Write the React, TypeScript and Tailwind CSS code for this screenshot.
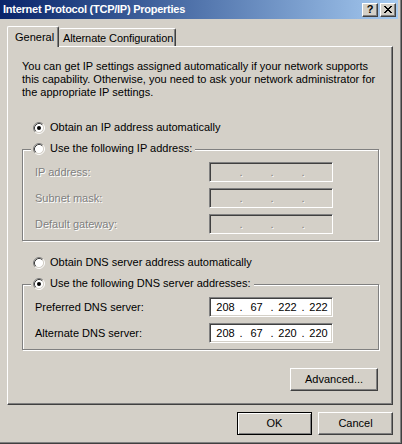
import { Fragment, type ReactNode } from 'react'
import clsx from 'clsx'

const disabledText = 'text-[#808080] [text-shadow:1px_1px_0_#ffffff]'

function Radio({ checked }: { checked?: boolean }) {
  return (
    <svg width="12" height="12" viewBox="0 0 12 12" className="shrink-0">
      <circle cx="6" cy="6" r="4.5" fill="#ffffff" />
      <path d="M2.11 9.89A5.5 5.5 0 0 1 9.89 2.11" fill="none" stroke="#808080" />
      <path d="M9.89 2.11A5.5 5.5 0 0 1 2.11 9.89" fill="none" stroke="#ffffff" />
      <path d="M2.82 9.18A4.5 4.5 0 0 1 9.18 2.82" fill="none" stroke="#404040" />
      <path d="M9.18 2.82A4.5 4.5 0 0 1 2.82 9.18" fill="none" stroke="#d4d0c8" />
      {checked && <circle cx="6" cy="6" r="2" fill="#000000" />}
    </svg>
  )
}

function RadioRow({ label, checked }: { label: string; checked?: boolean }) {
  return (
    <div className="flex h-[13px] items-center gap-[5px]">
      <Radio checked={checked} />
      <span>{label}</span>
    </div>
  )
}

function Group({ legend, checked, children }: { legend: string; checked?: boolean; children: ReactNode }) {
  return (
    <div className="ml-[14px] mr-[13px] border border-[#808080] pb-[6px] shadow-[1px_1px_0_#ffffff,inset_1px_1px_0_#ffffff]">
      <div className="-mt-[8px] ml-[8px] flex h-[13px] w-fit items-center gap-[5px] bg-[#d4d0c8] pl-[2px] pr-[3px]">
        <Radio checked={checked} />
        <span>{legend}</span>
      </div>
      <div className="mt-[7px] flex flex-col gap-[6px] pl-[12px]">{children}</div>
    </div>
  )
}

function IpBox({ parts, disabled }: { parts?: string[]; disabled?: boolean }) {
  const vals = parts ?? ['', '', '', '']
  return (
    <div
      className={clsx(
        'flex h-[20px] w-[124px] items-center border border-t-[#808080] border-l-[#808080] border-b-white border-r-white pl-[2px] shadow-[inset_1px_1px_0_#404040,inset_-1px_-1px_0_#d4d0c8]',
        disabled ? 'bg-[#d4d0c8]' : 'bg-white',
      )}
    >
      {vals.map((v, i) => (
        <Fragment key={i}>
          {i > 0 && <span className={clsx('w-[4px] text-center', disabled && disabledText)}>.</span>}
          <span className="w-[27px] text-center">{v}</span>
        </Fragment>
      ))}
    </div>
  )
}

function IpRow({ label, parts, disabled }: { label: string; parts?: string[]; disabled?: boolean }) {
  return (
    <div className="flex h-[20px] items-center">
      <span className={clsx('w-[174px]', disabled && disabledText)}>{label}</span>
      <IpBox parts={parts} disabled={disabled} />
    </div>
  )
}

function Button({ children, w, isDefault }: { children: ReactNode; w: string; isDefault?: boolean }) {
  return (
    <div
      className={clsx(
        'flex h-[23px] items-center justify-center',
        w,
        isDefault
          ? 'border border-black shadow-[inset_1px_1px_0_#ffffff,inset_-1px_-1px_0_#808080]'
          : 'border border-t-white border-l-white border-b-[#404040] border-r-[#404040] shadow-[inset_-1px_-1px_0_#808080]',
      )}
    >
      {children}
    </div>
  )
}

function CaptionButton({ children }: { children: ReactNode }) {
  return (
    <div className="flex h-[14px] w-[16px] items-center justify-center border border-t-white border-l-white border-b-[#404040] border-r-[#404040] bg-[#d4d0c8] shadow-[inset_-1px_-1px_0_#808080]">
      {children}
    </div>
  )
}

export default function App() {
  return (
    <div className="h-[444px] w-[402px] border-b border-r border-[#404040] bg-[#d4d0c8] font-['Liberation_Sans',Arial,sans-serif] text-[11px] leading-[13px] text-black">
      <div className="flex h-full flex-col border-b border-r border-[#808080] pb-[2px] pr-[2px]">
        {/* caption */}
        <div className="flex h-[19px] shrink-0 items-center justify-between bg-gradient-to-r from-[#0a246a] to-[#a6caf0] pl-[3px] pr-[2px]">
          <span className="text-[11px] font-bold tracking-[-0.25px] text-white">Internet Protocol (TCP/IP) Properties</span>
          <div className="flex gap-[2px]">
            <CaptionButton>
              <span className="text-[11px] font-bold leading-none">?</span>
            </CaptionButton>
            <CaptionButton>
              <svg width="8" height="7" viewBox="0 0 8 7" shapeRendering="crispEdges">
                <path d="M0 0h2v1h-2zM6 0h2v1h-2zM1 1h2v1h-2zM5 1h2v1h-2zM2 2h4v1h-4zM3 3h2v1h-2zM2 4h4v1h-4zM1 5h2v1h-2zM5 5h2v1h-2zM0 6h2v1h-2zM6 6h2v1h-2z" fill="#000" />
              </svg>
            </CaptionButton>
          </div>
        </div>

        {/* tabs */}
        <div className="ml-[7px] mt-[7px] flex h-[20px] items-end">
          <div className="relative z-10 -mb-px flex h-[21px] w-[52px] items-start whitespace-nowrap rounded-t-[2px] border-l border-t border-r border-l-white border-t-white border-r-[#404040] bg-[#d4d0c8] pl-[7px] pt-[4px] shadow-[inset_-1px_0_0_#808080]">
            General
          </div>
          <div className="flex h-[18px] w-[117px] items-start overflow-hidden whitespace-nowrap rounded-t-[2px] border-t border-r border-t-white border-r-[#404040] pl-[4px] pt-[3px] tracking-[-0.1px] shadow-[inset_-1px_0_0_#808080]">
            Alternate Configuration
          </div>
        </div>

        {/* panel */}
        <div className="ml-[7px] w-[386px] border border-t-white border-l-white border-b-[#404040] border-r-[#404040] pb-[13px] pt-[13px] shadow-[inset_-1px_-1px_0_#808080]">
          <p className="ml-[14px] mr-[13px]">
            You can get IP settings assigned automatically if your network supports this capability. Otherwise, you need to ask your network administrator for the appropriate IP settings.
          </p>
          <div className="ml-[25px] mt-[22px]">
            <RadioRow label="Obtain an IP address automatically" checked />
          </div>
          <div className="mt-[15px]">
            <Group legend="Use the following IP address:">
              <IpRow label="IP address:" disabled />
              <IpRow label="Subnet mask:" disabled />
              <IpRow label="Default gateway:" disabled />
            </Group>
          </div>
          <div className="ml-[25px] mt-[15px]">
            <RadioRow label="Obtain DNS server address automatically" />
          </div>
          <div className="mt-[15px]">
            <Group legend="Use the following DNS server addresses:" checked>
              <IpRow label="Preferred DNS server:" parts={['208', '67', '222', '222']} />
              <IpRow label="Alternate DNS server:" parts={['208', '67', '220', '220']} />
            </Group>
          </div>
          <div className="mr-[14px] mt-[18px] flex justify-end">
            <Button w="w-[88px]">Advanced...</Button>
          </div>
        </div>

        {/* dialog buttons */}
        <div className="mr-[5px] mt-[7px] flex justify-end gap-[6px]">
          <Button w="w-[75px]" isDefault>
            OK
          </Button>
          <Button w="w-[75px]">Cancel</Button>
        </div>
      </div>
    </div>
  )
}
